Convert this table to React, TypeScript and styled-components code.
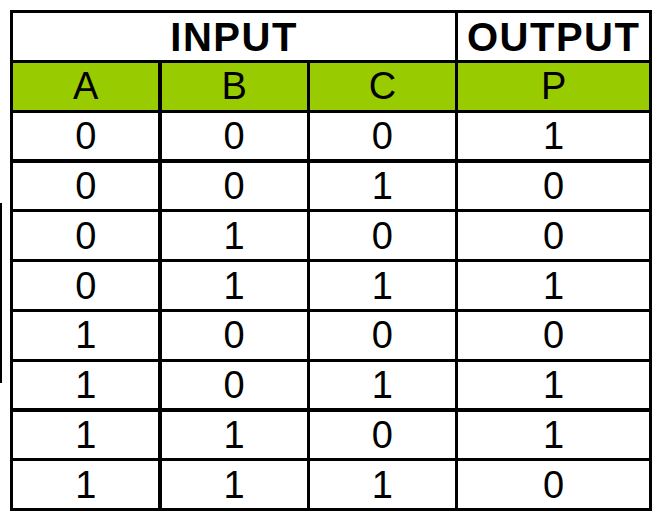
import React from "react";
import styled, { createGlobalStyle } from "styled-components";

const Global = createGlobalStyle`
  html, body { margin: 0; padding: 0; background: #ffffff; }
  body { font-family: "Liberation Sans", Arial, sans-serif; }
`;

const Page = styled.div`
  display: flex;
  align-items: flex-start;
  width: 657px;
  height: 514px;
`;

const SideMark = styled.div`
  width: 2px;
  height: 180px;
  margin-top: 203px;
  background: #000;
`;

const Table = styled.div`
  margin-left: 8px;
  margin-top: 10px;
  display: grid;
  grid-template-columns: 145px 145px 145px 191px;
  grid-auto-rows: 46.5px;
  gap: 3.3px;
  padding: 3.3px;
  background: #000;
`;

const Cell = styled.div<{ $span?: number; $green?: boolean; $bold?: boolean }>`
  grid-column: span ${(p) => p.$span ?? 1};
  background: ${(p) => (p.$green ? "#99cc00" : "#ffffff")};
  display: flex;
  align-items: center;
  justify-content: center;
  color: #000;
  font-family: "Liberation Sans", Arial, sans-serif;
  font-size: ${(p) => (p.$bold ? "40px" : "38px")};
  font-weight: ${(p) => (p.$bold ? 700 : 400)};
  letter-spacing: ${(p) => (p.$bold ? "1.5px" : "0")};
  line-height: 1;
`;

const rows = [
  [0, 0, 0, 1],
  [0, 0, 1, 0],
  [0, 1, 0, 0],
  [0, 1, 1, 1],
  [1, 0, 0, 0],
  [1, 0, 1, 1],
  [1, 1, 0, 1],
  [1, 1, 1, 0],
];

export default function App() {
  return (
    <>
      <Global />
      <Page>
        <SideMark />
        <Table>
          <Cell $span={3} $bold>INPUT</Cell>
          <Cell $bold>OUTPUT</Cell>
          {["A", "B", "C", "P"].map((h) => (
            <Cell key={h} $green>{h}</Cell>
          ))}
          {rows.map((r, i) =>
            r.map((v, j) => <Cell key={`${i}-${j}`}>{v}</Cell>)
          )}
        </Table>
      </Page>
    </>
  );
}
